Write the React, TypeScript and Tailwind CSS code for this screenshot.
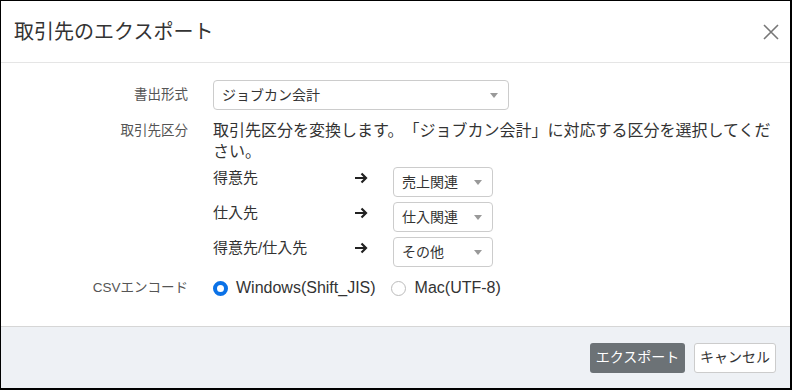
import { ReactNode } from "react";

const FONT = "font-['Liberation_Sans','Noto_Sans_CJK_JP',sans-serif]";

function Caret() {
  return (
    <svg width="8" height="5" viewBox="0 0 8 5" className="shrink-0">
      <path d="M0 0 H8 L4 5 Z" fill="#999" />
    </svg>
  );
}

function Select({ value, className }: { value: string; className: string }) {
  return (
    <div
      className={`h-[30px] border border-[#ccc] rounded-[4px] bg-white flex items-center justify-between pl-[8px] pr-[10px] text-[14px] text-[#333] ${className}`}
    >
      <span>{value}</span>
      <Caret />
    </div>
  );
}

function Arrow() {
  return (
    <svg width="14" height="12" viewBox="0 0 14 12" className="mt-[5px]">
      <path d="M1 6 H12 M7.5 1.5 L12 6 L7.5 10.5" fill="none" stroke="#222" strokeWidth="2.2" />
    </svg>
  );
}

function Radio({ checked }: { checked: boolean }) {
  return checked ? (
    <span className="w-[15px] h-[15px] rounded-full border-[4px] border-[#0b72e7] bg-white shrink-0" />
  ) : (
    <span className="w-[15px] h-[15px] rounded-full border border-[#bbb] bg-white shrink-0" />
  );
}

function Row({ label, labelClass = "leading-[30px]", children }: { label: string; labelClass?: string; children: ReactNode }) {
  return (
    <div className="flex items-start">
      <div className={`w-[187px] shrink-0 text-right text-[13.5px] text-[#555] ${labelClass}`}>{label}</div>
      <div className="ml-[25px] flex-1 min-w-0">{children}</div>
    </div>
  );
}

const MAPPINGS = [
  { from: "得意先", to: "売上関連" },
  { from: "仕入先", to: "仕入関連" },
  { from: "得意先/仕入先", to: "その他" },
];

export default function App() {
  return (
    <div className={`w-[794px] h-[390px] bg-white ${FONT} [text-spacing-trim:space-all]`}>
      <div className="w-[792px] h-[390px] border-l border-t border-r-2 border-b-2 border-black flex flex-col">
        <div className="h-[62px] border-b border-[#e5e5e5] flex items-center justify-between pl-[13px] pr-[10px]">
          <h1 className="text-[20px] text-[#333] leading-none">取引先のエクスポート</h1>
          <svg width="18" height="18" viewBox="0 0 18 18">
            <path d="M2 2 L16 16 M16 2 L2 16" stroke="#777" strokeWidth="1.6" />
          </svg>
        </div>

        <div className="flex-1 pt-[17px] flex flex-col">
          <Row label="書出形式">
            <Select value="ジョブカン会計" className="w-[296px]" />
          </Row>
          <Row label="取引先区分" labelClass="pt-[10px] leading-[22px]">
            <div className="pt-[10px] w-[566px] text-[16px] text-[#333] leading-[21px]">
              取引先区分を変換します。「ジョブカン会計」に対応する区分を選択してください。
            </div>
            <div className="mt-[5px] flex flex-col gap-[5px]">
              {MAPPINGS.map((m) => (
                <div key={m.from} className="flex items-start h-[30px]">
                  <span className="w-[141px] text-[15px] text-[#333] leading-[22px]">{m.from}</span>
                  <span className="w-[39px]">
                    <Arrow />
                  </span>
                  <Select value={m.to} className="w-[100px]" />
                </div>
              ))}
            </div>
          </Row>
          <div className="mt-[6px]">
            <Row label="CSVエンコード">
              <div className="h-[30px] flex items-center text-[16px] text-[#333]">
                <Radio checked />
                <span className="ml-[8px]">Windows(Shift_JIS)</span>
                <span className="ml-[15px] flex items-center">
                  <Radio checked={false} />
                  <span className="ml-[9px]">Mac(UTF-8)</span>
                </span>
              </div>
            </Row>
          </div>
        </div>

        <div className="h-[62px] border-t border-[#d6d6d6] bg-[#eef1f5] flex items-center justify-end gap-[9px] pr-[14px]">
          <button className="h-[30px] w-[95px] rounded-[3px] bg-[#6c7276] text-white text-[14px]">
            エクスポート
          </button>
          <button className="h-[30px] w-[82px] rounded-[3px] bg-white border border-[#ccc] text-[#333] text-[14px]">
            キャンセル
          </button>
        </div>
      </div>
    </div>
  );
}
